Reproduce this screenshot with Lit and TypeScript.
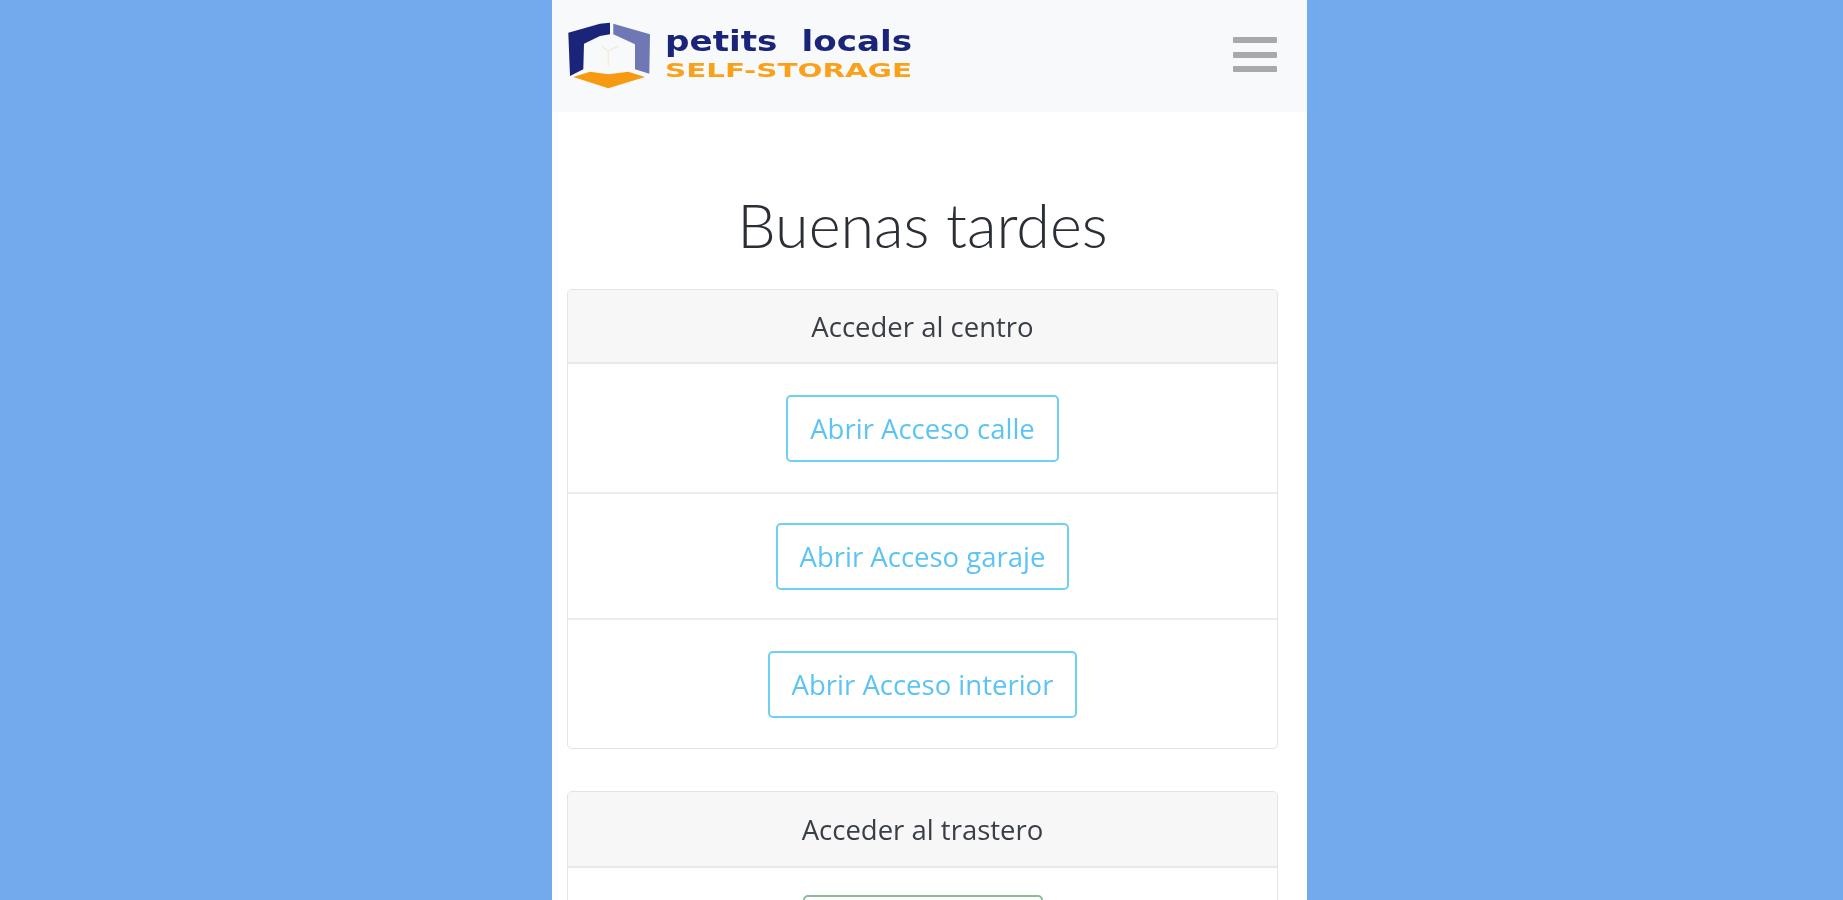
import { LitElement, html, css } from "lit";
import { customElement } from "lit/decorators.js";

@customElement("app-root")
export class AppRoot extends LitElement {
  static styles = css`
    :host {
      display: block;
      height: 900px;
      overflow: hidden;
      background: #73aaee;
      font-family: "Open Sans", "Noto Sans", sans-serif;
    }
    .column {
      box-sizing: border-box;
      width: 755px;
      height: 900px;
      margin-left: 552px;
      overflow: hidden;
      background: #fff;
      filter: blur(0.6px);
    }
    .nav {
      display: flex;
      align-items: center;
      justify-content: space-between;
      box-sizing: border-box;
      height: 112px;
      padding: 0 30px 3px 15px;
      background: #f8f9fa;
    }
    .logo {
      display: block;
    }
    .logo text {
      font-weight: 700;
    }
    .petits {
      font-family: "DejaVu Sans", sans-serif;
      font-size: 28px;
      fill: #1a2478;
      word-spacing: 10px;
    }
    .self {
      font-family: "DejaVu Sans", sans-serif;
      font-size: 19.5px;
      fill: #f9a11b;
    }
    .burger {
      display: flex;
      flex-direction: column;
      gap: 8.5px;
      width: 44px;
    }
    .burger span {
      display: block;
      height: 6px;
      border-radius: 1px;
      background: #a9a9a9;
    }
    .content {
      padding: 0 29px 0 15px;
    }
    h1 {
      margin: 72px 0 0;
      height: 105px;
      font-family: "Lato", sans-serif;
      font-size: 61px;
      line-height: 82px;
      font-weight: 300;
      text-align: center;
      color: #2a2f36;
    }
    .card {
      border: 1px solid #e3e3e3;
      border-radius: 5px;
      margin-bottom: 42px;
      overflow: hidden;
    }
    .head {
      height: 74px;
      box-sizing: border-box;
      display: flex;
      align-items: center;
      justify-content: center;
      background: #f7f7f7;
      border-bottom: 2px solid #e8e8e8;
      font-size: 27.5px;
      color: #3a3f47;
    }
    .tall {
      height: 76px;
    }
    .row {
      display: flex;
      align-items: center;
      justify-content: center;
      box-sizing: border-box;
      border-bottom: 2px solid #ececec;
    }
    .row:last-child {
      border-bottom: 0;
    }
    .r1 { height: 130px; }
    .r2 { height: 126px; }
    .r3 { height: 128px; }
    .r4 { height: 130px; align-items: flex-start; padding-top: 27px; }
    .btn {
      box-sizing: border-box;
      height: 67px;
      padding: 0 22px;
      display: flex;
      align-items: center;
      border: 2px solid #6fd0f2;
      border-radius: 5px;
      background: #fff;
      font-size: 27.5px;
      color: #5cc4f2;
      white-space: nowrap;
    }
    .green {
      width: 240px;
      border-color: #8dbb98;
    }
  `;

  render() {
    return html`
      <div class="column">
        <header class="nav">
          <svg class="logo" width="350" height="72" viewBox="0 0 350 72">
            <path d="M1.3 13.7 L33 4.7 L43 3.7 L43 15.3 L33 17 L17 24.7 L16.3 50.3 L3 57 Z" fill="#1a2478"/>
            <path d="M46.3 4.7 L83 15.3 L82.3 54.7 L68 50.3 L68 25.3 L46.3 15.3 Z" fill="#6f78b4"/>
            <path d="M6.3 58 L23 52.7 L41.3 55.3 L61.3 52.7 L78 58 L41.3 69.3 Z" fill="#f79a12"/>
            <path d="M34.7 27 L41.3 32 L51.3 27 M41.3 32 L41.3 47" fill="none" stroke="#f6edd9" stroke-width="1.5"/>
            <text class="petits" x="98" y="32" textLength="247" lengthAdjust="spacingAndGlyphs">petits locals</text>
            <text class="self" x="98" y="58" textLength="247" lengthAdjust="spacingAndGlyphs">SELF-STORAGE</text>
          </svg>
          <div class="burger"><span></span><span></span><span></span></div>
        </header>
        <main class="content">
          <h1>Buenas tardes</h1>
          <section class="card">
            <div class="head">Acceder al centro</div>
            <div class="row r1"><div class="btn">Abrir Acceso calle</div></div>
            <div class="row r2"><div class="btn">Abrir Acceso garaje</div></div>
            <div class="row r3"><div class="btn">Abrir Acceso interior</div></div>
          </section>
          <section class="card">
            <div class="head tall">Acceder al trastero</div>
            <div class="row r4"><div class="btn green"></div></div>
          </section>
        </main>
      </div>
    `;
  }
}
